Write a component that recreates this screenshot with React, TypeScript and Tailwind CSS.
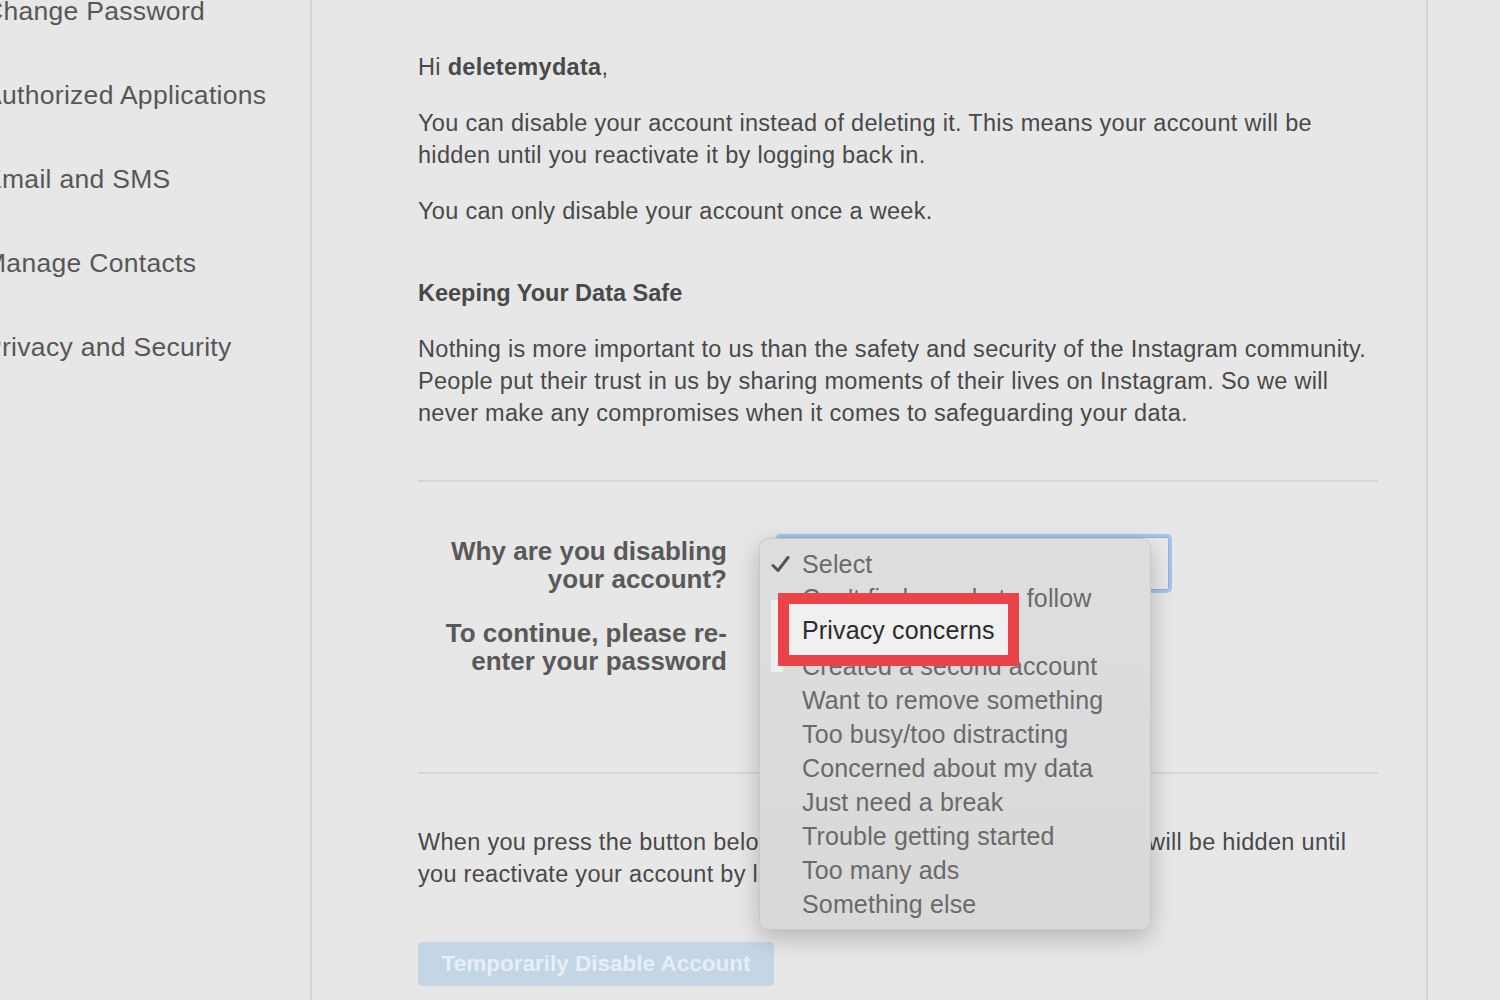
import React from 'react';

const sideItems = ['Change Password', 'Authorized Applications', 'Email and SMS', 'Manage Contacts', 'Privacy and Security'];

const reasons = [
  'Select',
  "Can't find people to follow",
  'Privacy concerns',
  'Created a second account',
  'Want to remove something',
  'Too busy/too distracting',
  'Concerned about my data',
  'Just need a break',
  'Trouble getting started',
  'Too many ads',
  'Something else',
];

const App: React.FC = () => {
  return (
    <div className="w-[1500px] h-[1000px] overflow-hidden bg-[#e7e7e7] flex font-['Liberation_Sans',Arial,sans-serif]">
      {/* Sidebar */}
      <aside className="w-[312px] shrink-0 border-r-2 border-[#d4d4d4] overflow-hidden">
        <ul className="-mt-[30px] -ml-[16px]">
          {sideItems.map((item) => (
            <li key={item} className="h-[84px] flex items-center text-[26.5px] tracking-[0.3px] text-[#575757] whitespace-nowrap">
              {item}
            </li>
          ))}
        </ul>
      </aside>

      {/* Main */}
      <main className="w-[1116px] shrink-0 border-r-2 border-[#d4d4d4] pl-[106px] pr-[48px] pt-[51px] text-[#494949] text-[23.5px] leading-[32px] tracking-[0.3px]">
        <p>
          Hi <span className="font-bold">deletemydata</span>,
        </p>
        <p className="mt-[24px]">
          You can disable your account instead of deleting it. This means your account will be
          <br />
          hidden until you reactivate it by logging back in.
        </p>
        <p className="mt-[24px]">You can only disable your account once a week.</p>

        <h3 className="mt-[50px] font-bold tracking-normal">Keeping Your Data Safe</h3>
        <p className="mt-[24px] whitespace-nowrap">
          Nothing is more important to us than the safety and security of the Instagram community.
          <br />
          People put their trust in us by sharing moments of their lives on Instagram. So we will
          <br />
          never make any compromises when it comes to safeguarding your data.
        </p>

        <div className="mt-[51px] h-[2px] bg-[#d6d6d6]"></div>

        {/* Form */}
        <div className="mt-[52px] grid grid-cols-[309px_397px] gap-x-[48px] items-start tracking-normal">
          <label className="mt-[3px] text-right font-bold text-[26px] leading-[28px] text-[#595959]">
            Why are you disabling
            <br />
            your account?
          </label>
          <div className="relative">
            <div className="h-[59px] rounded-[5px] border-[3px] border-[#a7c3ea] bg-[#e9e9e9] shadow-[inset_0_0_0_1px_#8fb2e2]"></div>

            {/* Native-looking dropdown menu */}
            <div className="absolute left-[-16px] top-[4px] w-[392px] z-10 rounded-[10px] border border-[#c8c8c8] bg-gradient-to-b from-[#dedede] to-[#d9d9d9] shadow-[0_8px_24px_rgba(0,0,0,0.22)] py-[8px]">
              {reasons.map((r, i) => (
                <div
                  key={r}
                  className={`relative h-[34px] flex items-center pl-[42px] text-[25px] tracking-[0.15px] whitespace-nowrap ${i === 2 ? 'text-[#2b2b2b]' : 'text-[#6a6a6a]'}`}
                >
                  {i === 0 && (
                    <svg className="absolute left-[11px] top-[9px]" width="19" height="17" viewBox="0 0 19 17">
                      <path d="M2 9.5 L7 14.5 L17 1.5" fill="none" stroke="#555" strokeWidth="3" strokeLinecap="round" strokeLinejoin="round" />
                    </svg>
                  )}
                  {r}
                </div>
              ))}

              {/* Highlight annotation */}
              <div className="absolute left-[11px] top-[61px] w-[12px] h-[72px] bg-[#efefef]"></div>
              <div className="absolute left-[18px] top-[54px] w-[241px] h-[73px] border-[11px] border-[#ea4448] bg-[#f0f0f0] flex items-center pl-[13px] text-[25px] tracking-[0.15px] text-[#2b2b2b] whitespace-nowrap">
                Privacy concerns
              </div>
            </div>
          </div>

          <label className="mt-[26px] text-right font-bold text-[26px] leading-[28px] text-[#595959]">
            To continue, please re-
            <br />
            enter your password
          </label>
          <div></div>
        </div>

        <div className="mt-[97px] h-[2px] bg-[#d6d6d6]"></div>

        <p className="mt-[52px] whitespace-nowrap">
          When you press the button below, your photos, comments and likes will be hidden until
          <br />
          you reactivate your account by logging back in.
        </p>

        <button className="mt-[52px] h-[44px] w-[356px] rounded-[4px] bg-[#c4d5e6] text-[#e8eef5] font-bold text-[22.5px] tracking-normal">
          Temporarily Disable Account
        </button>
      </main>
    </div>
  );
};

export default App;
